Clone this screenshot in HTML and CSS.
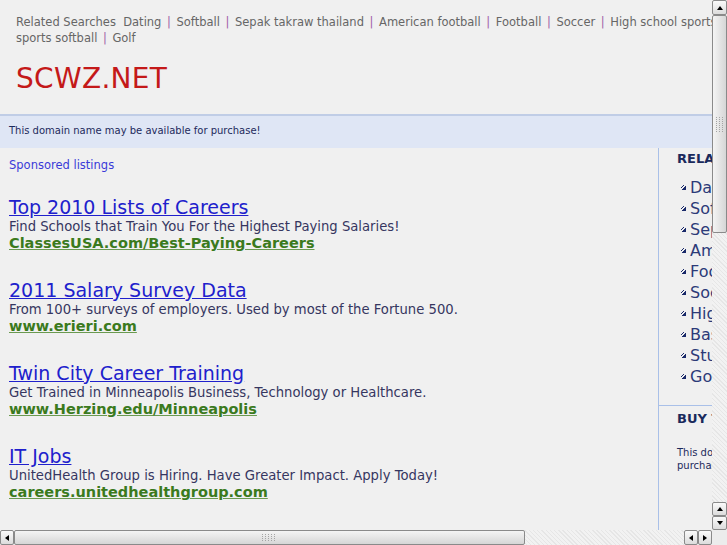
FILE: index.html
```html
<!DOCTYPE html>
<html>
<head>
<meta charset="utf-8">
<title>scwz.net</title>
<link rel="stylesheet" href="styles.css">
</head>
<body>
<div class="page">
  <div class="top">
    <div class="related">
      <div class="rline">Related Searches&nbsp; <a href="#">Dating</a><span class="sep">|</span><a href="#">Softball</a><span class="sep">|</span><a href="#">Sepak takraw thailand</a><span class="sep">|</span><a href="#">American football</a><span class="sep">|</span><a href="#">Football</a><span class="sep">|</span><a href="#">Soccer</a><span class="sep">|</span><a href="#">High school sports</a><span class="sep">|</span><a href="#">Basketball</a><span class="sep">|</span><a href="#">Student</a></div>
      <div class="rline"><a href="#">sports softball</a><span class="sep">|</span><a href="#">Golf</a></div>
    </div>
    <div class="logo">SCWZ.NET</div>
  </div>
  <div class="domainbar">This domain name may be available for purchase!</div>
  <div class="main">
    <div class="content">
      <a class="sponsored" href="#">Sponsored listings</a>
      <div class="listing">
        <a class="ltitle" href="#">Top 2010 Lists of Careers</a>
        <div class="ldesc">Find Schools that Train You For the Highest Paying Salaries!</div>
        <a class="lurl" href="#">ClassesUSA.com/Best-Paying-Careers</a>
      </div>
      <div class="listing">
        <a class="ltitle" href="#">2011 Salary Survey Data</a>
        <div class="ldesc">From 100+ surveys of employers. Used by most of the Fortune 500.</div>
        <a class="lurl" href="#">www.erieri.com</a>
      </div>
      <div class="listing">
        <a class="ltitle" href="#">Twin City Career Training</a>
        <div class="ldesc">Get Trained in Minneapolis Business, Technology or Healthcare.</div>
        <a class="lurl" href="#">www.Herzing.edu/Minneapolis</a>
      </div>
      <div class="listing">
        <a class="ltitle" href="#">IT Jobs</a>
        <div class="ldesc">UnitedHealth Group is Hiring. Have Greater Impact. Apply Today!</div>
        <a class="lurl" href="#">careers.unitedhealthgroup.com</a>
      </div>
    </div>
    <div class="sidebar">
      <div class="sbox">
        <div class="shead">RELATED SEARCHES</div>
        <ul class="slist">
          <li><a href="#">Dating</a></li>
          <li><a href="#">Softball</a></li>
          <li><a href="#">Sepak takraw thailand</a></li>
          <li><a href="#">American football</a></li>
          <li><a href="#">Football</a></li>
          <li><a href="#">Soccer</a></li>
          <li><a href="#">High school sports</a></li>
          <li><a href="#">Basketball</a></li>
          <li><a href="#">Student sports softball</a></li>
          <li><a href="#">Golf</a></li>
        </ul>
      </div>
      <div class="sbox buy">
        <div class="shead">BUY THIS DOMAIN</div>
        <p class="stext">This domain may be available for<br>purchase. Click here for details.</p>
      </div>
    </div>
  </div>
</div>

<div class="vscroll">
  <div class="sbtn"><span class="tri up"></span></div>
  <div class="vthumb"><span class="grip"></span></div>
  <div class="vtrack"></div>
  <div class="sbtn"><span class="tri up"></span></div>
  <div class="sbtn"><span class="tri down"></span></div>
</div>
<div class="hscroll">
  <div class="sbtn"><span class="tri left"></span></div>
  <div class="hthumb"><span class="grip"></span></div>
  <div class="htrack"></div>
  <div class="sbtn"><span class="tri left"></span></div>
  <div class="sbtn"><span class="tri right"></span></div>
</div>
<div class="corner"></div>
</body>
</html>
```

FILE: styles.css
```css
html, body {
  margin: 0;
  padding: 0;
  overflow: hidden;
  background: #f0f0f0;
  font-family: "DejaVu Sans", Verdana, sans-serif;
}
a { text-decoration: none; }

.page {
  width: 925px;
}

.top {
  padding: 14px 0 0 16px;
  height: 101px;
  box-sizing: border-box;
}
.related {
  font-size: 11.5px;
  line-height: 16px;
  color: #666;
}
.rline { white-space: nowrap; }
.related a { color: #666; }
.related .sep { color: #a060a8; margin: 0 5.6px; }

.logo {
  margin-top: 17px;
  font-size: 28px;
  line-height: 32px;
  color: #c41919;
  letter-spacing: 0.3px;
}

.domainbar {
  border-top: 2px solid #c0cde6;
  background: #dfe6f5;
  height: 32px;
  padding-left: 9px;
  font-size: 10px;
  line-height: 30px;
  color: #1d2a5c;
  margin-top: 13px;
}

.main {
  display: flex;
}
.content {
  width: 658px;
  padding: 9px 0 0 9px;
  box-sizing: border-box;
}
.sponsored {
  display: block;
  color: #3a3ad8;
  font-size: 11.5px;
  line-height: 16px;
  margin-bottom: 24px;
}
.listing {
  display: flex;
  flex-direction: column;
  align-items: flex-start;
  margin-bottom: 28px;
}
.ltitle {
  color: #2020cc;
  text-decoration: underline;
  font-size: 19px;
  line-height: 20px;
}
.ldesc {
  color: #363660;
  font-size: 13.2px;
  line-height: 17px;
  margin-top: 1px;
}
.lurl {
  color: #3b7a1d;
  font-weight: bold;
  text-decoration: underline;
  text-decoration-color: #6a9a50;
  font-size: 14.5px;
  line-height: 17px;
}

.sidebar {
  border-left: 1px solid #a9c0e8;
  width: 266px;
  height: 382px;
}
.sbox {
  padding: 3px 0 0 18px;
}
.shead {
  font-weight: bold;
  font-size: 13px;
  line-height: 16px;
  color: #1a2a5c;
}
.slist {
  list-style: none;
  margin: 10px 0 0 0;
  padding: 0 0 0 4px;
}
.slist li {
  font-size: 16px;
  line-height: 21px;
  padding-left: 9px;
  position: relative;
  white-space: nowrap;
}
.slist li::before {
  content: "";
  position: absolute;
  left: 0;
  top: 8px;
  width: 5px;
  height: 5px;
  background:
    linear-gradient(135deg, transparent 45%, #1a2a6a 46% 60%, transparent 61%),
    linear-gradient(135deg, transparent 50%, #1a2a6a 51%);
  background-size: 3px 3px, 5px 5px;
  background-repeat: no-repeat;
  background-position: 0 0, 0 0;
}
.slist a { color: #2c3a78; }
.buy {
  border-top: 1px solid #a9c0e8;
  margin-top: 18px;
  padding-top: 5px;
}
.stext {
  margin: 19px 0 0 0;
  font-size: 10px;
  line-height: 13px;
  color: #1d2a5c;
  white-space: nowrap;
}

/* fake scrollbars */
.vscroll {
  position: fixed;
  right: 0;
  top: 0;
  width: 15px;
  height: 530px;
  display: flex;
  flex-direction: column;
  background: #f2f2f2;
  background-image: repeating-linear-gradient(45deg, #e6e6e6 0 1px, transparent 1px 3px);
}
.hscroll {
  position: fixed;
  left: 0;
  bottom: 0;
  width: 712px;
  height: 15px;
  display: flex;
  background: #f2f2f2;
  background-image: repeating-linear-gradient(45deg, #e6e6e6 0 1px, transparent 1px 3px);
}
.corner {
  position: fixed;
  right: 0;
  bottom: 0;
  width: 15px;
  height: 15px;
  background: #ececec;
}
.sbtn {
  width: 15px;
  height: 15px;
  flex: none;
  box-sizing: border-box;
  border: 1px solid #8a8a8a;
  border-radius: 2px;
  background: linear-gradient(#fafafa, #dcdcdc);
  display: flex;
  align-items: center;
  justify-content: center;
}
.vscroll .sbtn { height: 14px; }
.vscroll .sbtn:first-child { height: 15px; }
.vscroll .sbtn:nth-child(4) { margin-top: 1px; }
.hscroll .sbtn { width: 14px; }
.tri { width: 0; height: 0; }
.tri.up { border-left: 3px solid transparent; border-right: 3px solid transparent; border-bottom: 4px solid #000; }
.tri.down { border-left: 3px solid transparent; border-right: 3px solid transparent; border-top: 4px solid #000; }
.tri.left { border-top: 3px solid transparent; border-bottom: 3px solid transparent; border-right: 4px solid #000; }
.tri.right { border-top: 3px solid transparent; border-bottom: 3px solid transparent; border-left: 4px solid #000; }

.vthumb {
  height: 218px;
  flex: none;
  box-sizing: border-box;
  border: 1px solid #8a8a8a;
  border-radius: 2px;
  background: linear-gradient(90deg, #f4f4f4, #d6d6d6);
  display: flex;
  align-items: center;
  justify-content: center;
}
.hthumb {
  width: 511px;
  flex: none;
  box-sizing: border-box;
  border: 1px solid #8a8a8a;
  border-radius: 2px;
  background: linear-gradient(#f4f4f4, #d6d6d6);
  display: flex;
  align-items: center;
  justify-content: center;
}
.vtrack, .htrack { flex: 1; }
.grip {
  background-image: conic-gradient(at 1px 1px, transparent 75%, #a4a4a4 0);
  background-size: 3px 2px;
}
.hthumb .grip { width: 15px; height: 8px; }
.vthumb .grip { width: 8px; height: 15px; background-size: 3px 2px; }
```
